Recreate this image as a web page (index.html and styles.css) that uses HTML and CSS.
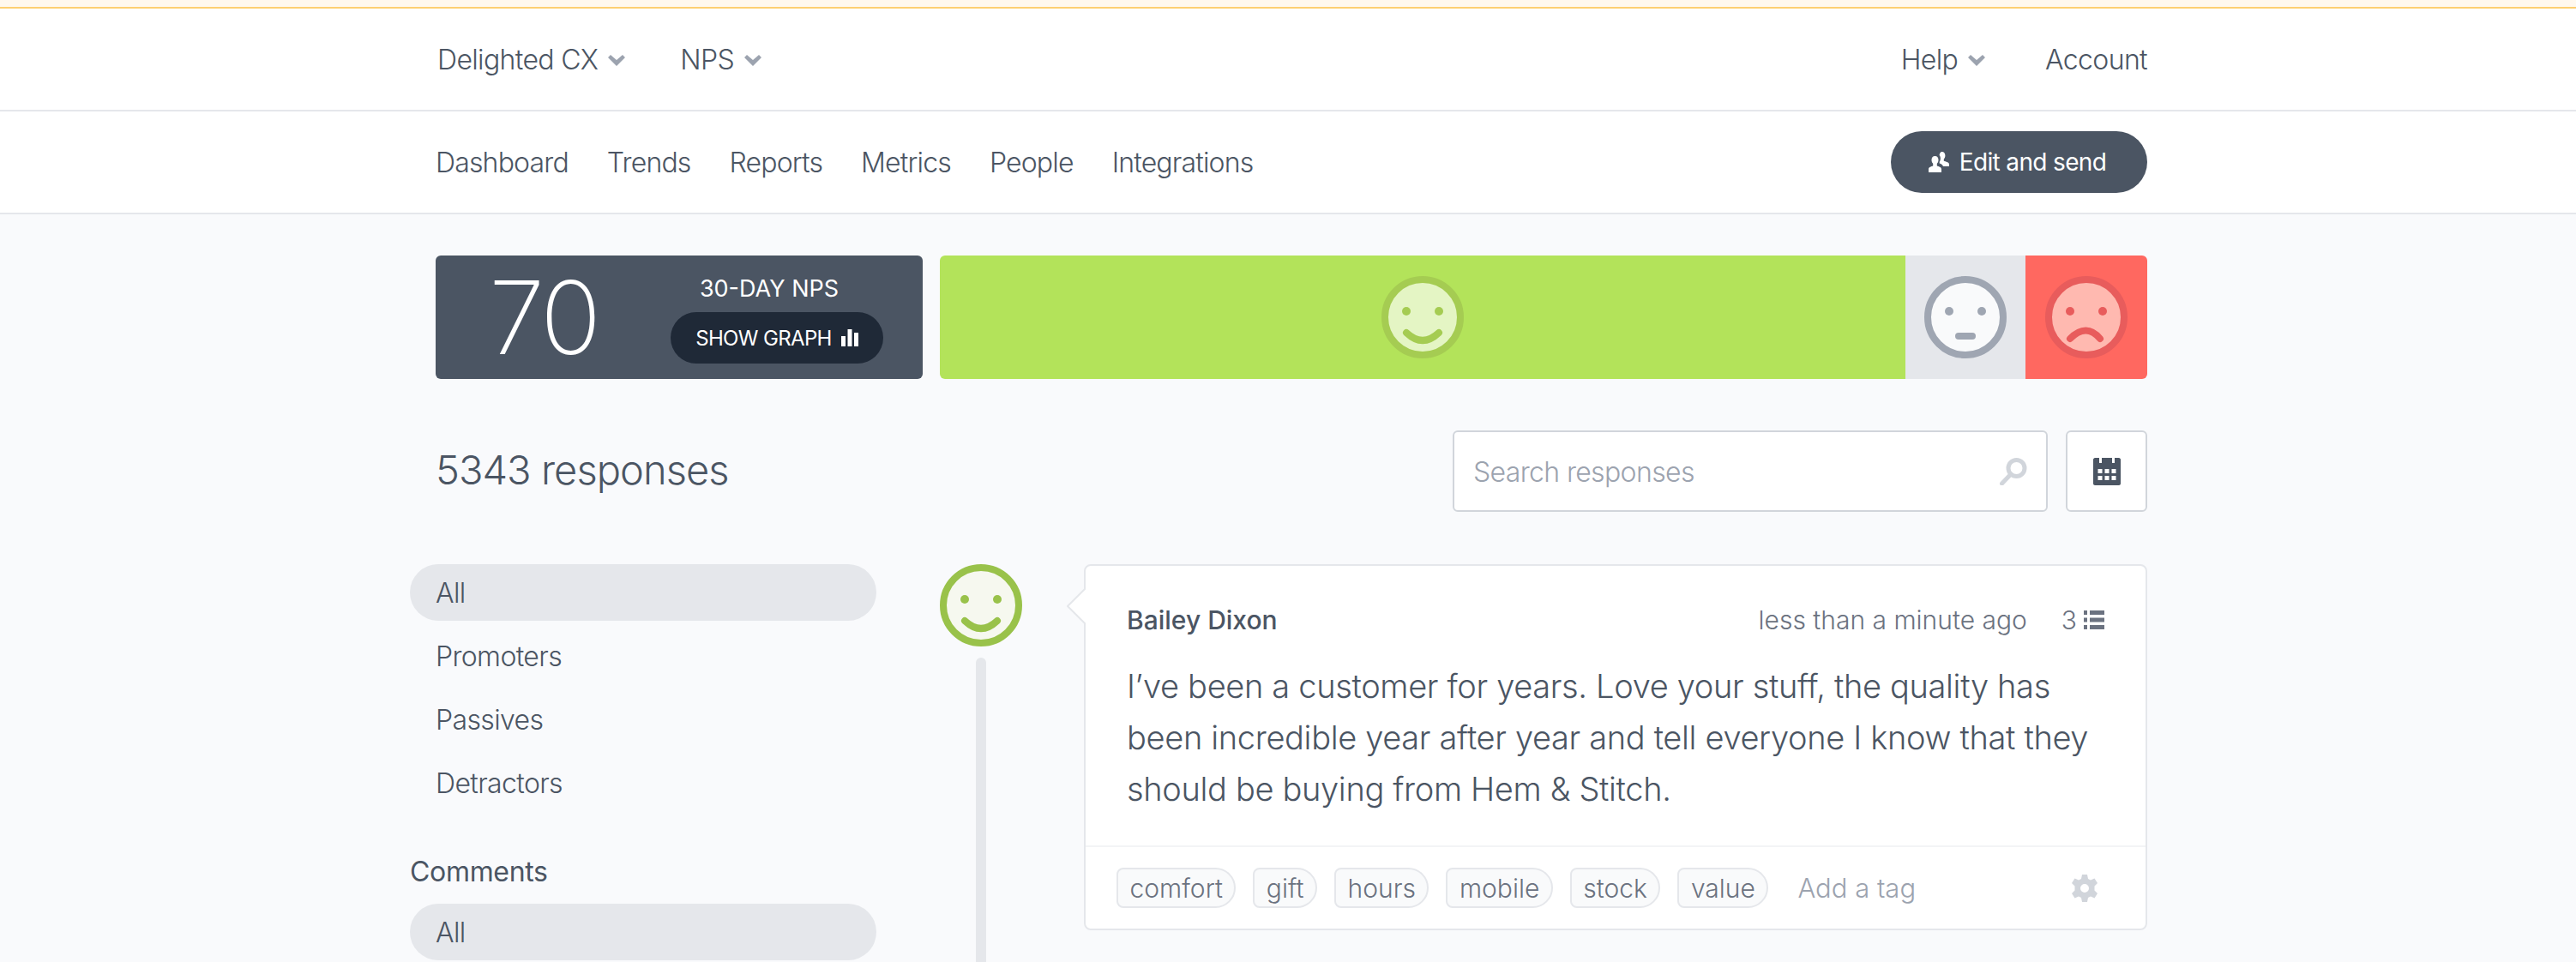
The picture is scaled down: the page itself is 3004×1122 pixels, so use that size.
FILE: index.html
```html
<!DOCTYPE html>
<html lang="en">
<head>
<meta charset="utf-8">
<title>Delighted NPS</title>
<link rel="stylesheet" href="styles.css">
</head>
<body>
<div class="notice"></div>
<header class="bar bar-top">
  <div class="wrap row">
    <nav class="row gap-top">
      <a class="item">Delighted CX <svg class="chev" viewBox="0 0 20 14"><path d="M0 3l3-3 7 6 7-6 3 3-10 10z"/></svg></a>
      <a class="item">NPS <svg class="chev" viewBox="0 0 20 14"><path d="M0 3l3-3 7 6 7-6 3 3-10 10z"/></svg></a>
    </nav>
    <nav class="row gap-right">
      <a class="item">Help <svg class="chev" viewBox="0 0 20 14"><path d="M0 3l3-3 7 6 7-6 3 3-10 10z"/></svg></a>
      <a class="item">Account</a>
    </nav>
  </div>
</header>
<header class="bar bar-nav">
  <div class="wrap row">
    <nav class="row gap-nav">
      <a class="item">Dashboard</a><a class="item">Trends</a><a class="item">Reports</a><a class="item">Metrics</a><a class="item">People</a><a class="item">Integrations</a>
    </nav>
    <a class="send">
      <svg class="people" viewBox="0 0 24 24"><path d="M15.500 0c2.500 0 3.900 2 3.900 4.400 0 1.700-.6 3.200-1.600 4.200v2.200c2.100.8 6.200 1.400 6.200 3.700V17h-7c-.6-1.700-2.400-2.800-4.300-3.500v-1.800c.8-1 1.200-2.300 1.200-3.700 0-1.600-.4-2.900-1.300-3.900C12.900 2 13.900 0 15.500 0z"/><path d="M7.500 5c2.600 0 4 2.100 4 4.500 0 1.800-.6 3.300-1.700 4.300v2.700c2.300.8 5.200 1.600 5.200 3.700V24H0v-3.800c0-2.100 2.900-2.900 5.200-3.700v-2.700C4.100 12.800 3.500 11.300 3.500 9.500 3.500 7.100 4.900 5 7.500 5z"/></svg>
      Edit and send
    </a>
  </div>
</header>
<main class="wrap main">
  <section class="score">
    <div class="nps">
      <div class="nps-num">70</div>
      <div class="nps-side">
        <div class="nps-title">30-DAY NPS</div>
        <a class="graph">SHOW GRAPH <svg class="bars" viewBox="0 0 20 20"><rect x="0" y="8" width="5" height="12"/><rect x="7.500" y="0" width="5" height="20"/><rect x="15" y="4" width="5" height="16"/></svg></a>
      </div>
    </div>
    <div class="seg seg-pro">
      <svg class="face" viewBox="0 0 96 96"><circle class="f-pro" cx="48" cy="48" r="44"/><circle class="e-pro" cx="29" cy="41" r="5"/><circle class="e-pro" cx="67" cy="41" r="5"/><path class="m-pro" d="M29 66Q48 84 67 66"/></svg>
    </div>
    <div class="seg seg-pas">
      <svg class="face" viewBox="0 0 96 96"><circle class="f-pas" cx="48" cy="48" r="44"/><circle class="e-pas" cx="29" cy="41" r="5"/><circle class="e-pas" cx="67" cy="41" r="5"/><rect class="e-pas" x="36" y="66" width="24" height="8" rx="4"/></svg>
    </div>
    <div class="seg seg-det">
      <svg class="face" viewBox="0 0 96 96"><circle class="f-det" cx="48" cy="48" r="44"/><circle class="e-det" cx="29" cy="41" r="5"/><circle class="e-det" cx="67" cy="41" r="5"/><path class="m-det" d="M29 73Q48 54 64 73"/></svg>
    </div>
  </section>

  <section class="tools">
    <h1 class="count">5343 responses</h1>
    <div class="row tool-right">
      <div class="search">
        <span>Search responses</span>
        <svg class="mag" viewBox="0 0 32 32"><circle cx="20" cy="12" r="9.500"/><path d="M13.500 19L3 30"/></svg>
      </div>
      <a class="cal">
        <svg class="cal-i" viewBox="0 0 32 32"><path d="M2 0h5v6h3V0h12v6h3V0h5c1 0 2 1 2 2v28c0 1-1 2-2 2H2c-1 0-2-1-2-2V2C0 1 1 0 2 0z"/><g class="cal-d"><rect x="5.500" y="13" width="5" height="5"/><rect x="13.500" y="13" width="5" height="5"/><rect x="21.500" y="13" width="5" height="5"/><rect x="5.500" y="21" width="5" height="5"/><rect x="13.500" y="21" width="5" height="5"/><rect x="21.500" y="21" width="5" height="5"/></g></svg>
      </a>
    </div>
  </section>

  <section class="body">
    <aside class="side">
      <a class="pill on">All</a>
      <a class="pill">Promoters</a>
      <a class="pill">Passives</a>
      <a class="pill">Detractors</a>
      <h2 class="side-h">Comments</h2>
      <a class="pill on">All</a>
    </aside>
    <div class="timeline">
      <svg class="avatar" viewBox="0 0 96 96"><circle class="f-av" cx="48" cy="48" r="44"/><circle class="e-av" cx="29" cy="41" r="5"/><circle class="e-av" cx="67" cy="41" r="5"/><path class="m-av" d="M29 66Q48 84 67 66"/></svg>
      <div class="line"></div>
    </div>
    <article class="card">
      <svg class="tip" viewBox="0 0 22 44"><path d="M22 1L1 22l21 21"/></svg>
      <div class="card-main">
        <div class="meta">
          <strong class="name">Bailey Dixon</strong>
          <span class="time">less than a minute ago</span>
          <span class="score-n">3 <svg class="list" viewBox="0 0 24 22"><path d="M0 0h4v5H0zM7 0h17v5H7zM0 8.500h4v5H0zM7 8.500h17v5H7zM0 17h4v5H0zM7 17h17v5H7z"/></svg></span>
        </div>
        <p class="msg">I’ve been a customer for years. Love your stuff, the quality has been incredible year after year and tell everyone I know that they should be buying from Hem &amp; Stitch.</p>
      </div>
      <div class="tags">
        <span class="tag">comfort</span><span class="tag">gift</span><span class="tag">hours</span><span class="tag">mobile</span><span class="tag">stock</span><span class="tag">value</span>
        <span class="add">Add a tag</span>
        <svg class="gear" viewBox="0 0 32 32"><path fill-rule="evenodd" d="M13 0h6l1 5 3 1.500 4.500-2L31 10l-3.500 3.500v5L31 22l-3.500 5.500-4.500-2L20 27l-1 5h-6l-1-5-3-1.500-4.500 2L1 22l3.500-3.500v-5L1 10l3.500-5.500 4.500 2L12 5zM16 11a5 5 0 1 0 0 10 5 5 0 0 0 0-10z"/></svg>
      </div>
    </article>
  </section>
</main>
</body>
</html>
```
FILE: styles.css
```css
* { box-sizing: border-box; }
html, body { margin: 0; height: 100%; overflow: hidden; }
body { background: #f9fafc; font-family: Inter, "Liberation Sans", sans-serif; font-weight: 300; color: #4b5563; font-size: 32px; letter-spacing: -0.02em; }
.notice { height: 10px; background: #fff8ee; border-bottom: 2px solid #fdcf72; }
.bar { background: #fff; height: 120px; border-bottom: 2px solid #e5e7eb; }
.wrap { margin-left: 508px; width: 1996px; }
.row { display: flex; align-items: center; }
.bar .wrap { height: 100%; justify-content: space-between; }
.gap-top { gap: 64px; padding-left: 2px; }
.gap-right { gap: 70px; }
.gap-nav { gap: 45px; letter-spacing: -0.026em; }
.item { display: flex; align-items: center; gap: 12px; white-space: nowrap; }
.chev { width: 20px; height: 14px; fill: #9ca3af; margin-top: 4px; }
.send { display: flex; align-items: center; justify-content: center; gap: 12px; width: 299px; height: 72px; padding-right: 4px; border-radius: 36px; background: #4b5563; color: #fff; font-weight: 400; font-size: 28px; }
.people { width: 24px; height: 24px; fill: #fff; }

.main { padding-top: 48px; }
.score { display: flex; height: 144px; }
.nps { width: 568px; margin-right: 20px; background: #4b5563; border-radius: 6px; color: #fff; display: flex; padding-left: 62px; }
.nps-num { width: 212px; font-size: 118px; font-weight: 200; line-height: 144px; letter-spacing: -0.03em; }
.nps-side { width: 248px; display: flex; flex-direction: column; align-items: center; padding-top: 20px; }
.nps-title { font-size: 27px; font-weight: 400; line-height: 38px; margin-right: 18px; letter-spacing: 0; }
.graph { margin-top: 8px; width: 248px; height: 60px; border-radius: 30px; background: #1f2937; display: flex; align-items: center; justify-content: center; gap: 11px; font-size: 24px; font-weight: 400; }
.bars { width: 20px; height: 20px; fill: #fff; }
.seg { display: flex; align-items: center; justify-content: center; }
.seg-pro { width: 1126px; background: #b3e35a; border-radius: 6px 0 0 6px; }
.seg-pas { width: 140px; background: #e5e7eb; }
.seg-det { width: 142px; background: #ff6860; border-radius: 0 6px 6px 0; }
.face, .avatar { width: 96px; height: 96px; display: block; }
.face circle:first-child, .avatar circle:first-child { stroke-width: 8; }
.f-pro { fill: #e4f5c4; stroke: #a5cc52; }
.e-pro { fill: #a5cc52; }
.m-pro { fill: none; stroke: #a5cc52; stroke-width: 8; stroke-linecap: round; }
.f-pas { fill: #f9fafb; stroke: #9fa6b2; }
.e-pas { fill: #9fa6b2; }
.f-det { fill: #ffb9b0; stroke: #e85c5c; }
.e-det { fill: #e85c5c; }
.m-det { fill: none; stroke: #e85c5c; stroke-width: 8; stroke-linecap: round; }

.tools { display: flex; justify-content: space-between; align-items: center; margin-top: 60px; height: 95px; }
.count { margin: 0 0 4px; font-size: 47px; font-weight: 300; letter-spacing: -0.02em; }
.tool-right { gap: 21px; }
.search { width: 694px; height: 95px; background: #fff; border: 2px solid #d1d5db; border-radius: 6px; display: flex; align-items: center; justify-content: space-between; padding: 2px 22px 0; color: #9ca3af; }
.mag { width: 33px; height: 32px; fill: none; stroke: #d1d5db; stroke-width: 5; stroke-linecap: round; margin-top: -2px; }
.cal { width: 95px; height: 95px; background: #fff; border: 2px solid #d1d5db; border-radius: 6px; display: flex; align-items: center; justify-content: center; }
.cal-i { width: 32px; height: 32px; fill: #4b5563; }
.cal-d { fill: #fff; }

.body { display: flex; align-items: flex-start; margin-top: 61px; margin-left: -30px; }
.side { display: flex; flex-direction: column; gap: 8px; width: 544px; flex: none; }
.pill { height: 66px; border-radius: 33px; padding-left: 30px; display: flex; align-items: center; }
.pill.on { background: #e5e7eb; }
.side-h { margin: 43px 0 9px; font-size: 32px; font-weight: 400; line-height: 40px; letter-spacing: -0.01em; }
.timeline { margin-left: 74px; width: 96px; flex: none; display: flex; flex-direction: column; align-items: center; gap: 13px; }
.avatar { flex: none; }
.f-av { fill: #f6f8ef; stroke: #99c24a; }
.e-av { fill: #99c24a; }
.m-av { fill: none; stroke: #99c24a; stroke-width: 8; stroke-linecap: round; }
.line { width: 12px; height: 400px; border-radius: 6px; background: #e5e7eb; }
.card { position: relative; margin-left: 72px; width: 1240px; height: 427px; background: #fff; border: 2px solid #e5e7eb; border-radius: 8px; display: flex; flex-direction: column; }
.tip { position: absolute; left: -22px; top: 25px; width: 22px; height: 44px; fill: #fff; stroke: #e5e7eb; stroke-width: 2; }
.card-main { height: 328px; padding: 41px 48px 0; border-bottom: 2px solid #f3f4f6; }
.meta { display: flex; align-items: center; height: 44px; font-size: 30px; letter-spacing: 0; }
.name { font-weight: 500; margin-right: auto; }
.time { margin-right: 40px; color: #6b7280; }
.score-n { display: flex; align-items: center; gap: 8px; color: #6b7280; }
.list { width: 24px; height: 22px; fill: #6b7280; }
.msg { margin: 25px 0 0; font-size: 38px; line-height: 60px; letter-spacing: -0.009em; }
.tags { flex: 1; display: flex; align-items: center; gap: 20px; padding: 0 55px 0 36px; letter-spacing: 0; }
.tag { height: 47px; padding: 0 13.5px; background: #f9fafb; border: 2px solid #e5e7eb; border-radius: 8px 24px 24px 8px; display: flex; align-items: center; font-size: 30px; color: #6b7280; }
.add { margin-left: 14px; font-size: 31px; color: #9ca3af; }
.gear { margin-left: auto; width: 32px; height: 32px; fill: #d1d5db; }
```
